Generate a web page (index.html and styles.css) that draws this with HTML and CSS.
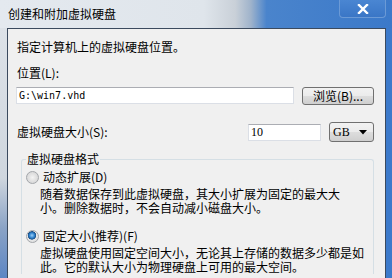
FILE: index.html
```html
<!DOCTYPE html>
<html lang="zh-CN">
<head>
    <meta charset="UTF-8">
    <meta name="viewport" content="width=device-width, initial-scale=1.0">
    <title>创建和附加虚拟硬盘</title>
    <link rel="stylesheet" href="styles.css">
</head>
<body>
    <div class="window">
        <div class="titlebar">
            <span class="title">创建和附加虚拟硬盘</span>
            <span class="close-btn">
                <svg width="12" height="10" viewBox="0 0 12 10">
                    <path d="M2 1 L10 9 M10 1 L2 9" stroke="#ffffff" stroke-width="2.4" stroke-linecap="square"/>
                </svg>
            </span>
        </div>

        <div class="frame">
            <div class="side left"></div>

            <div class="content">
                <div class="text intro">指定计算机上的虚拟硬盘位置。</div>

                <div class="text field-label">位置(L):</div>
                <div class="path-row">
                    <div class="textbox path-box">G:\win7.vhd</div>
                    <div class="button">浏览(B)...</div>
                </div>

                <div class="size-row">
                    <div class="text size-label">虚拟硬盘大小(S):</div>
                    <div class="textbox size-box">10</div>
                    <div class="combo">
                        <span>GB</span>
                        <svg width="8" height="5" viewBox="0 0 8 5"><path d="M0 0 H8 L4 4.5 Z" fill="#000"/></svg>
                    </div>
                </div>

                <!-- disk format options -->
                <fieldset class="group">
                    <legend>虚拟硬盘格式</legend>

                    <div class="option">
                        <span class="radio"></span>
                        <span>动态扩展(D)</span>
                    </div>
                    <div class="desc">随着数据保存到此虚拟硬盘，其大小扩展为固定的最大大<br>小。删除数据时，不会自动减小磁盘大小。</div>

                    <div class="option second">
                        <span class="radio checked"></span>
                        <span>固定大小(推荐)(F)</span>
                    </div>
                    <div class="desc">虚拟硬盘使用固定空间大小，无论其上存储的数据多少都是如<br>此。它的默认大小为物理硬盘上可用的最大空间。</div>
                </fieldset>
            </div>

            <div class="side right"></div>
        </div>
    </div>
</body>
</html>
```

FILE: styles.css
```css
/* Global Styles */
body {
    margin: 0;
    padding: 0;
    font-family: 'Noto Sans CJK SC', 'Noto Sans', sans-serif;
    font-size: 12px;
    color: #000;
    background-color: #f0f0f0;
    overflow: hidden;
}

.window {
    width: 392px;
    height: 278px;
    display: flex;
    flex-direction: column;
    overflow: hidden;
}

/* Title bar */
.titlebar {
    height: 28px;
    flex-shrink: 0;
    display: flex;
    align-items: flex-start;
    padding-left: 8px;
    background: linear-gradient(to right, #e4e9ef 0, #dfe5eb 52%, #c9d0d8 60%, #9fb3cb 64%, #4a84cc 68%, #3b79c9 100%);
}

.title {
    line-height: 28px;
    font-size: 12px;
}

.close-btn {
    margin-left: auto;
    margin-right: 6px;
    width: 45px;
    height: 17px;
    display: flex;
    align-items: center;
    justify-content: center;
    border: 1px solid #6b9ad6;
    border-top: none;
    border-radius: 0 0 4px 4px;
    background: linear-gradient(#4a86d2, #3a76c6);
}

/* Window frame */
.frame {
    flex: 1;
    display: flex;
    min-height: 0;
}

.side {
    flex-shrink: 0;
}

.side.left {
    width: 7px;
    background: linear-gradient(#dde2e8 0, #cfd6de 60%, #8aa3c6 80%, #5d86c4 100%);
}

.side.right {
    width: 6px;
    background-color: #3c7acb;
}

.content {
    flex: 1;
    min-width: 0;
    background-color: #f0f0f0;
    border: 1px solid #3b4a5e;
    border-bottom: none;
    padding: 10px 11px 0 8px;
}

.text {
    padding-left: 1px;
    line-height: 16px;
}

.field-label {
    margin-top: 10px;
}

/* Inputs */
.path-row {
    display: flex;
    gap: 8px;
    margin-top: 6px;
}

.textbox {
    height: 17px;
    box-sizing: border-box;
    background-color: #fff;
    border: 1px solid #dbdfe6;
    border-top-color: #abadb3;
    line-height: 15px;
    padding-left: 2px;
}

.path-box {
    width: 278px;
    font-family: 'DejaVu Sans Mono', 'Liberation Mono', monospace;
    font-size: 10px;
}

.button {
    flex: 1;
    height: 18px;
    box-sizing: border-box;
    border: 1px solid #707070;
    border-radius: 3px;
    background: linear-gradient(#f2f2f2 0, #ebebeb 50%, #dddddd 51%, #cfcfcf 100%);
    text-align: center;
    line-height: 16px;
}

.size-row {
    display: flex;
    align-items: center;
    gap: 8px;
    margin-top: 17px;
}

.size-label {
    flex: 1;
}

.size-box {
    width: 73px;
    font-family: 'Liberation Serif', serif;
    font-size: 12px;
}

.combo {
    width: 45px;
    height: 20px;
    box-sizing: border-box;
    border: 1px solid #707070;
    border-radius: 3px;
    background: linear-gradient(#f2f2f2 0, #ebebeb 50%, #dddddd 51%, #cfcfcf 100%);
    display: flex;
    align-items: center;
    justify-content: space-between;
    padding: 0 6px 0 3px;
    font-family: 'Liberation Serif', serif;
}

/* Group box */
.group {
    margin: 9px 0 0 5px;
    padding: 2px 0 0 4px;
    border: 1px solid #d5dfe5;
    border-bottom: none;
    border-radius: 3px 3px 0 0;
    min-width: 0;
}

.group legend {
    padding: 0 1px;
    line-height: 16px;
}

.option {
    display: flex;
    align-items: center;
    gap: 4px;
    line-height: 16px;
}

.option.second {
    margin-top: 13px;
}

.radio {
    width: 13px;
    height: 13px;
    box-sizing: border-box;
    border-radius: 50%;
    border: 1px solid #a3a6aa;
    background: radial-gradient(circle at 50% 50%, #f4f4f4 0, #e2e2e2 45%, #cfd0d2 100%);
}

.radio.checked {
    background: radial-gradient(circle at 45% 40%, #9fd0f5 0, #2f83cf 28%, #1b4f86 44%, #e8e8e8 50%, #d6d7d9 100%);
}

.desc {
    margin: 2px 0 0 14px;
    line-height: 14px;
    white-space: nowrap;
}
```
